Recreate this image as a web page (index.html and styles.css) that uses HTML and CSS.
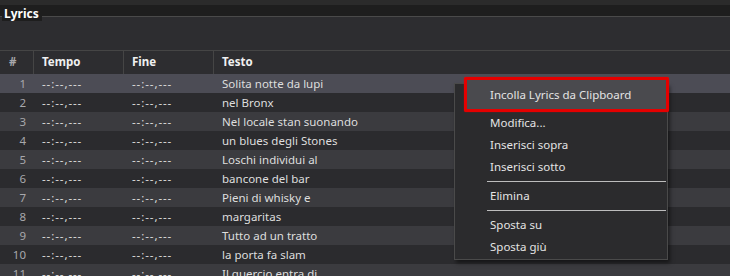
FILE: index.html
```html
<!DOCTYPE html>
<html lang="en">
<head>
    <meta charset="UTF-8">
    <title>Lyrics</title>
    <link rel="stylesheet" href="styles.css">
</head>
<body>

    <div class="top-strip"></div>

    <!-- Lyrics group -->
    <section class="group">
        <div class="group-title"><span class="label">Lyrics</span></div>
        <div class="toolbar"></div>

        <div class="grid">
            <div class="row head">
                <div class="cell num">#</div>
                <div class="cell">Tempo</div>
                <div class="cell">Fine</div>
                <div class="cell">Testo</div>
            </div>
            <div class="row selected">
                <div class="cell num">1</div><div class="cell time">--:--,---</div><div class="cell time">--:--,---</div><div class="cell">Solita notte da lupi</div>
            </div>
            <div class="row">
                <div class="cell num">2</div><div class="cell time">--:--,---</div><div class="cell time">--:--,---</div><div class="cell">nel Bronx</div>
            </div>
            <div class="row">
                <div class="cell num">3</div><div class="cell time">--:--,---</div><div class="cell time">--:--,---</div><div class="cell">Nel locale stan suonando</div>
            </div>
            <div class="row">
                <div class="cell num">4</div><div class="cell time">--:--,---</div><div class="cell time">--:--,---</div><div class="cell">un blues degli Stones</div>
            </div>
            <div class="row">
                <div class="cell num">5</div><div class="cell time">--:--,---</div><div class="cell time">--:--,---</div><div class="cell">Loschi individui al</div>
            </div>
            <div class="row">
                <div class="cell num">6</div><div class="cell time">--:--,---</div><div class="cell time">--:--,---</div><div class="cell">bancone del bar</div>
            </div>
            <div class="row">
                <div class="cell num">7</div><div class="cell time">--:--,---</div><div class="cell time">--:--,---</div><div class="cell">Pieni di whisky e</div>
            </div>
            <div class="row">
                <div class="cell num">8</div><div class="cell time">--:--,---</div><div class="cell time">--:--,---</div><div class="cell">margaritas</div>
            </div>
            <div class="row">
                <div class="cell num">9</div><div class="cell time">--:--,---</div><div class="cell time">--:--,---</div><div class="cell">Tutto ad un tratto</div>
            </div>
            <div class="row">
                <div class="cell num">10</div><div class="cell time">--:--,---</div><div class="cell time">--:--,---</div><div class="cell">la porta fa slam</div>
            </div>
            <div class="row">
                <div class="cell num">11</div><div class="cell time">--:--,---</div><div class="cell time">--:--,---</div><div class="cell">Il guercio entra di</div>
            </div>
        </div>
    </section>

    <!-- Context menu -->
    <div class="menu">
        <div class="item hot">Incolla Lyrics da Clipboard</div>
        <div class="item">Modifica...</div>
        <div class="item">Inserisci sopra</div>
        <div class="item">Inserisci sotto</div>
        <div class="sep"></div>
        <div class="item">Elimina</div>
        <div class="sep"></div>
        <div class="item">Sposta su</div>
        <div class="item">Sposta giù</div>
    </div>

</body>
</html>
```

FILE: styles.css
```css
body {
    margin: 0;
    background: #2d2d30;
    font-family: "Noto Sans", "Open Sans", sans-serif;
    font-size: 11.5px;
    color: #dedede;
    overflow: hidden;
}
.top-strip {
    height: 5px;
    background: #2b2b2b;
}
.group-title {
    height: 11px;
    background: #1e1e1e;
    border-bottom: 1px solid #4a4a4a;
    display: flex;
}
.label {
    margin-left: 2px;
    margin-top: 1px;
    height: 15px;
    padding: 0 3px 0 2px;
    background: #1e1e1e;
    color: #ffffff;
    font-size: 12px;
    font-weight: bold;
    line-height: 15px;
    position: relative;
}
.toolbar {
    height: 33px;
    background: #2d2d30;
}
.grid {
    border-top: 1px solid #454545;
}
.row {
    display: grid;
    grid-template-columns: 34px 90px 90px 1fr;
    height: 19px;
    line-height: 19px;
    background: #2b2b2e;
}
.row:nth-child(even) {
    background: #3b3b3f;
}
.row.selected {
    background: #4c4c55;
}
.row.head {
    height: 23px;
    line-height: 22px;
    background: #2d2d30;
    font-weight: bold;
    color: #f0f0f0;
}
.row.head .cell {
    border-right: 1px solid #454545;
    padding-left: 8px;
}
.row.head .cell:last-child {
    border-right: none;
}
.row.head .cell.num {
    text-align: left;
    padding-left: 9px;
    padding-right: 0;
}
.cell {
    padding-left: 8px;
    white-space: nowrap;
    overflow: hidden;
}
.cell.time {
    letter-spacing: 0.9px;
}
.cell.num {
    text-align: right;
    padding-left: 0;
    padding-right: 8px;
    color: #a8a8ac;
}
.menu {
    position: absolute;
    left: 454px;
    top: 83px;
    width: 212px;
    padding: 0 0 1px 0;
    background: #2b2b2d;
    border: 1px solid #4a4a4a;
    box-shadow: 2px 3px 4px rgba(0, 0, 0, 0.5);
    display: flex;
    flex-direction: column;
}
.item {
    height: 22px;
    line-height: 22px;
    padding-left: 35px;
    color: #e4e4e4;
}
.item.hot {
    margin: -7px -2px 0 9px;
    padding-left: 23px;
    height: 29px;
    line-height: 29px;
    background: #4a4a4e;
    border: 3px solid #e50000;
    border-radius: 2px;
    box-shadow: 0 0 1px #ff0000;
}
.sep {
    height: 1px;
    margin: 3px 1px 3px 32px;
    background: #bdbdbd;
}
```
